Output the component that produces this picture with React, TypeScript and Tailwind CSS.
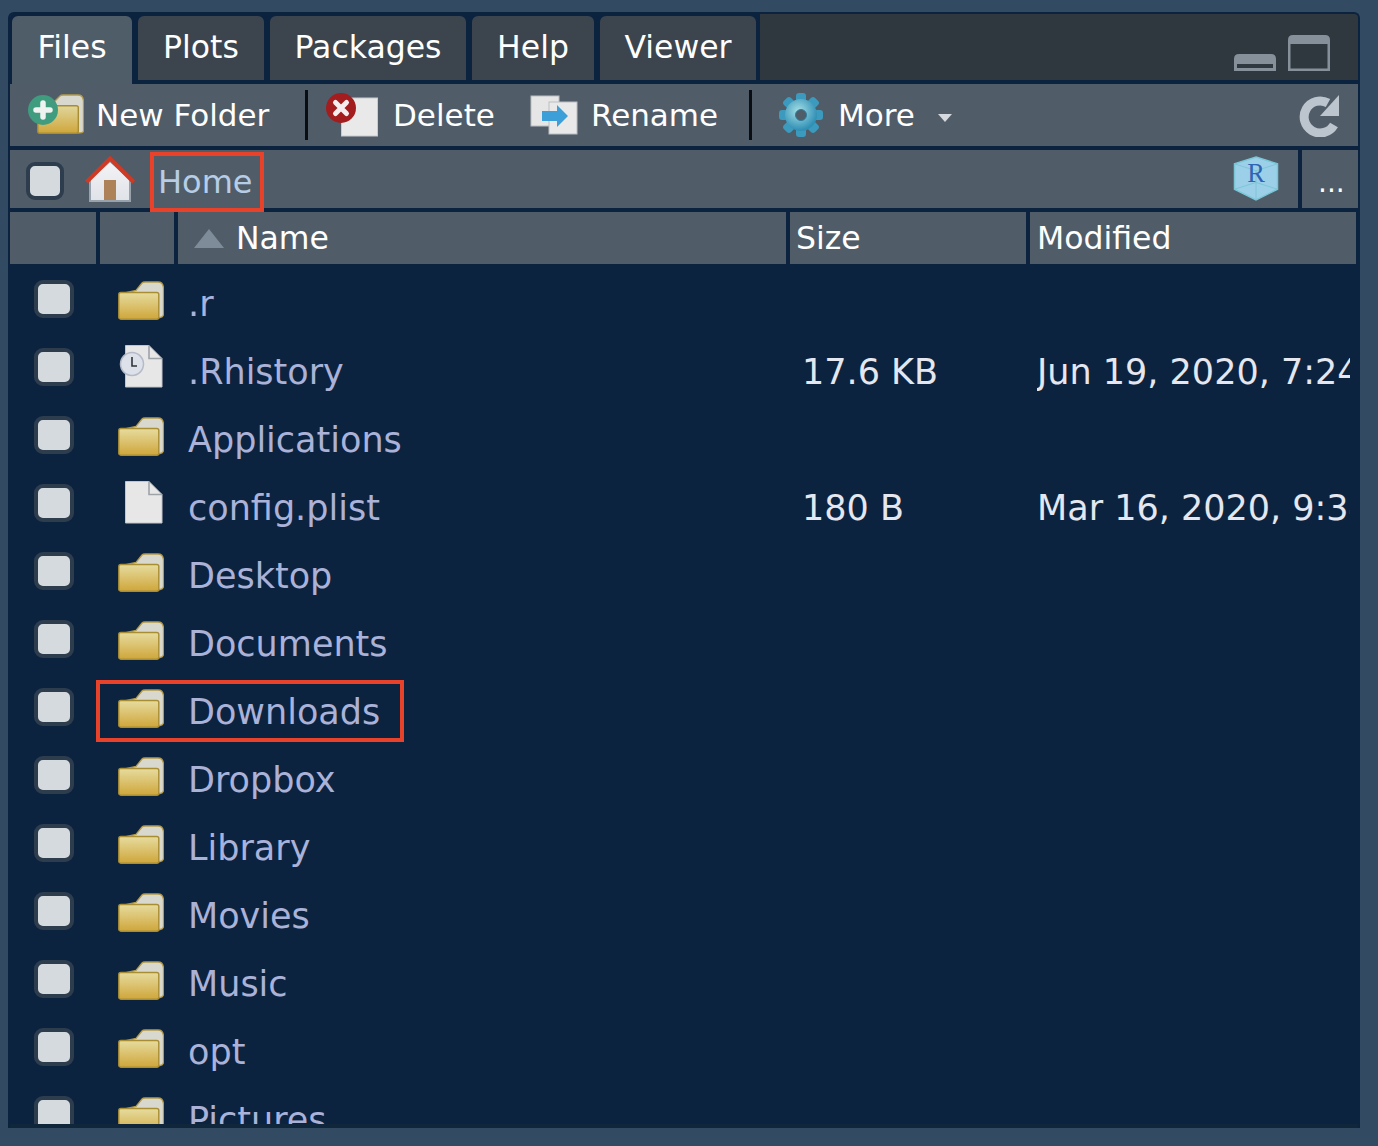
const FONT = "font-['DejaVu_Sans',sans-serif]";

const rows = [
  { name: ".r", kind: "folder" },
  { name: ".Rhistory", kind: "history", size: "17.6 KB", modified: "Jun 19, 2020, 7:24 PM" },
  { name: "Applications", kind: "folder" },
  { name: "config.plist", kind: "file", size: "180 B", modified: "Mar 16, 2020, 9:34 AM" },
  { name: "Desktop", kind: "folder" },
  { name: "Documents", kind: "folder" },
  { name: "Downloads", kind: "folder", marked: true },
  { name: "Dropbox", kind: "folder" },
  { name: "Library", kind: "folder" },
  { name: "Movies", kind: "folder" },
  { name: "Music", kind: "folder" },
  { name: "opt", kind: "folder" },
  { name: "Pictures", kind: "folder" },
];

const tabs = [
  { label: "Files", width: "w-[120px]" },
  { label: "Plots", width: "w-[126px]" },
  { label: "Packages", width: "w-[196px]" },
  { label: "Help", width: "w-[122px]" },
  { label: "Viewer", width: "w-[156px]" },
];

const FolderIcon = ({ className }: { className: string }) => (
  <svg className={className} viewBox="0 0 46 39">
    <defs>
      <linearGradient id="folderFront" x1="0" y1="0" x2="0" y2="1">
        <stop offset="0" stopColor="#e6dc9f" />
        <stop offset="1" stopColor="#cfa63a" />
      </linearGradient>
    </defs>
    <path
      d="M2 13 L18 9.5 L24 2 Q25 1 27 1 L40 1 Q45 1 45.5 7 L45.5 33 Q45.5 36 42 36.5 L38 37 Z"
      fill="#d9d8cf"
      stroke="#b39a4c"
      strokeWidth="1.3"
    />
    <rect x="0.8" y="11.5" width="40" height="26.7" rx="2" fill="url(#folderFront)" stroke="#a98d33" strokeWidth="1.4" />
  </svg>
);

const PageIcon = () => (
  <g>
    <path d="M0.5 0.5 L24 0.5 L37 13.5 L37 42 L0.5 42 Z" fill="#e7e7e7" stroke="#c3c5c8" />
    <path d="M24 0.5 L24 13.5 L37 13.5" fill="none" stroke="#9ea3a8" strokeWidth="1.6" />
  </g>
);

const FileIcon = ({ className }: { className: string }) => (
  <svg className={className} viewBox="0 0 38 43">
    <PageIcon />
  </svg>
);

const HistoryIcon = ({ className }: { className: string }) => (
  <svg className={className} viewBox="0 0 44 43">
    <g transform="translate(6 0)">
      <PageIcon />
    </g>
    <circle cx="13" cy="19" r="11.5" fill="#dde1ea" stroke="#b4bac8" strokeWidth="1.5" />
    <path d="M13 12 L13 21 L18 21" fill="none" stroke="#30343a" strokeWidth="1.6" />
  </svg>
);

const NewFolderIcon = () => (
  <svg className="h-[42px] w-[56px] shrink-0" viewBox="0 0 56 42">
    <path d="M24 10 L32 2 Q33 1 35 1 L50 1 Q55 1 55.5 7 L55.5 37 Q55.5 39 50 39 Z" fill="#d9d8cf" stroke="#b39a4c" strokeWidth="1.3" />
    <rect x="9.8" y="11.8" width="40.5" height="27.5" rx="2" fill="url(#newFolderFront)" stroke="#a98d33" strokeWidth="1.4" />
    <defs>
      <linearGradient id="newFolderFront" x1="0" y1="0" x2="0" y2="1">
        <stop offset="0" stopColor="#e0d69c" />
        <stop offset="1" stopColor="#cfa63a" />
      </linearGradient>
    </defs>
    <circle cx="15" cy="16" r="15" fill="#3f9c7f" />
    <path d="M15 9 L15 23 M8 16 L22 16" stroke="#eef3f1" strokeWidth="5.5" strokeLinecap="round" />
  </svg>
);

const DeleteIcon = () => (
  <svg className="ml-[3px] h-[44px] w-[52px] shrink-0" viewBox="0 0 52 44">
    <rect x="15.5" y="5" width="36" height="38" fill="#e9e9e9" stroke="#c8cacc" />
    <circle cx="15" cy="15" r="15" fill="#a31d1f" />
    <path d="M9.5 9.5 L20.5 20.5 M20.5 9.5 L9.5 20.5" stroke="#f4eeee" strokeWidth="5" strokeLinecap="round" />
  </svg>
);

const RenameIcon = () => (
  <svg className="h-[40px] w-[48px] shrink-0" viewBox="0 0 48 40">
    <rect x="1" y="1" width="28" height="30" fill="#e6e6e6" stroke="#b9bdc1" />
    <rect x="19" y="7" width="28" height="32" fill="#e9e9e9" stroke="#b9bdc1" />
    <path d="M12 16 L27 16 L27 10 L38 21 L27 32 L27 26 L12 26 Z" fill="#3d9fd8" />
  </svg>
);

const GearIcon = () => (
  <svg className="ml-[11px] h-[46px] w-[46px] shrink-0" viewBox="0 0 46 46">
    <defs>
      <radialGradient id="gearFill" cx="0.42" cy="0.38" r="0.6">
        <stop offset="0" stopColor="#a6dfe6" />
        <stop offset="1" stopColor="#2f8fb5" />
      </radialGradient>
    </defs>
    {[0, 45, 90, 135, 180, 225, 270, 315].map((deg) => (
      <rect key={deg} x="18" y="1" width="10" height="12" rx="3" fill="#3b9abd" transform={`rotate(${deg} 23 23)`} />
    ))}
    <circle cx="23" cy="23" r="16" fill="url(#gearFill)" />
    <circle cx="23" cy="23" r="5.5" fill="#505d69" stroke="#2c7c9d" strokeWidth="1" />
  </svg>
);

const RefreshIcon = () => (
  <svg className="h-[44px] w-[42px] shrink-0" viewBox="0 0 42 44">
    <path d="M36 32 A16 16 0 1 1 30 10" fill="none" stroke="#bcc4ce" strokeWidth="9" />
    <path d="M41 2 L41 23 L22 23 Z" fill="#bcc4ce" />
  </svg>
);

const HomeIcon = () => (
  <svg className="h-[46px] w-[50px] shrink-0" viewBox="0 0 50 46">
    <defs>
      <linearGradient id="houseWall" x1="0" y1="0" x2="0" y2="1">
        <stop offset="0" stopColor="#f4f4f6" />
        <stop offset="1" stopColor="#dfe2e8" />
      </linearGradient>
    </defs>
    <path d="M5 23 L25 5 L45 23 L45 45 L5 45 Z" fill="url(#houseWall)" stroke="#98a2ac" strokeWidth="2" />
    <rect x="19" y="24" width="12" height="20" fill="#ad8258" />
    <path d="M1.5 26 L25 2.5 L48.5 26" fill="none" stroke="#cf3a24" strokeWidth="4" />
  </svg>
);

const ProjectCube = () => (
  <svg className="h-[45px] w-[46px]" viewBox="0 0 46 46">
    <path d="M23 1 L45 8 L45 34 L23 45 L1 34 L1 8 Z" fill="#9bd0e8" stroke="#7ac6d6" strokeWidth="1.5" />
    <path d="M1 8 L23 15 L45 8 M1 34 L23 27 L45 34 M23 15 L23 45" fill="none" stroke="#74c3d2" strokeWidth="0.8" />
    <text x="23" y="27" textAnchor="middle" fontSize="27" fontFamily="'Liberation Serif',serif" fill="#2f63b3">
      R
    </text>
  </svg>
);

const Check = ({ className }: { className: string }) => (
  <div className={`${className} shrink-0 rounded-[9px] border-4 border-[#2d3d4e] bg-[#d5dade]`} />
);

const Separator = () => <div className="mx-[15px] h-[50px] w-[3px] shrink-0 bg-[#0a0d12] blur-[0.6px]" />;

const App = () => {
  return (
    <div className={`${FONT} h-[1146px] w-full overflow-hidden bg-[#324b63] pl-2 pr-[18px] pt-3`}>
      <div className="flex h-[1116px] flex-col overflow-hidden rounded-t-[6px] border-x-2 border-t-2 border-[#0c2340] bg-[#0c2340]">
        {/* tab bar */}
        <div className="flex h-[70px] shrink-0 bg-[#30383f]">
          <div className="flex gap-[6px] bg-[#0c2340] pl-[2px] pr-[4px] pt-[2px]">
            {tabs.map((tab, i) => (
              <div
                key={tab.label}
                className={`${tab.width} ${
                  i === 0 ? "h-[68px] bg-[#4f5d69]" : "h-[64px] bg-[#3c454e]"
                } z-10 rounded-t-[6px] text-center text-[31.5px] leading-[62px] text-white`}
              >
                {tab.label}
              </div>
            ))}
          </div>
          <div className="relative flex-1 border-b-4 border-[#0c2340]">
            <div className="absolute bottom-[9px] right-[28px] flex items-end gap-[12px]">
              <svg className="h-[18px] w-[42px]" viewBox="0 0 42 18">
                <path d="M0 18 L0 6 Q0 1 5 1 L37 1 Q42 1 42 6 L42 18 Z M3 11 L3 15 L39 15 L39 11 Z" fill="#85909a" fillRule="evenodd" />
              </svg>
              <svg className="h-[36px] w-[42px]" viewBox="0 0 42 36">
                <path d="M0 36 L0 5 Q0 0 5 0 L37 0 Q42 0 42 5 L42 36 Z M2.5 9 L2.5 33.5 L39.5 33.5 L39.5 9 Z" fill="#85909a" fillRule="evenodd" />
              </svg>
            </div>
          </div>
        </div>

        {/* toolbar */}
        <div className="flex h-[62px] shrink-0 items-center whitespace-nowrap bg-[#505d69] pl-[18px] pr-[18px] text-[31px] text-white">
          <NewFolderIcon />
          <span className="ml-[12px] w-[194px]">New Folder</span>
          <Separator />
          <DeleteIcon />
          <span className="ml-[15px] w-[137px]">Delete</span>
          <RenameIcon />
          <span className="ml-[13px] w-[143px]">Rename</span>
          <Separator />
          <GearIcon />
          <span className="ml-[14px]">More</span>
          <svg className="ml-[23px] mt-[5px] h-[8px] w-[14px]" viewBox="0 0 14 8">
            <path d="M0 0 L14 0 L7 8 Z" fill="#d5d8dc" />
          </svg>
          <div className="flex-1" />
          <RefreshIcon />
        </div>

        {/* path bar */}
        <div className="mt-1 flex h-[58px] shrink-0 gap-1">
          <div className="relative flex flex-1 items-center bg-[#505d69] pl-4 pt-1">
            <Check className="h-[38px] w-[38px]" />
            <div className="-mt-[4px] ml-[21px]">
              <HomeIcon />
            </div>
            <span className="ml-[23px] mt-[2px] text-[32px] text-[#b7cde6]">Home</span>
            <div className="absolute left-[140px] top-[2px] z-10 h-[60px] w-[114px] border-4 border-[#e8432a]" />
            <div className="absolute right-[19px] top-[6px]">
              <ProjectCube />
            </div>
          </div>
          <div className="w-[56px] bg-[#505d69] pl-[16px] text-[28px] leading-[66px] text-white">...</div>
        </div>

        {/* column headers */}
        <div className="mt-1 flex h-[52px] shrink-0 gap-1 pr-[2px] text-[31.5px] leading-[52px] text-white">
          <div className="w-[86px] bg-[#505d69]" />
          <div className="w-[74px] bg-[#505d69]" />
          <div className="flex w-[608px] items-center bg-[#505d69] pl-4">
            <svg className="h-[19px] w-[30px]" viewBox="0 0 30 19">
              <path d="M15 0 L30 19 L0 19 Z" fill="#7e8b99" />
            </svg>
            <span className="ml-3">Name</span>
          </div>
          <div className="w-[236px] bg-[#505d69] pl-[6px]">Size</div>
          <div className="flex-1 bg-[#505d69] pl-[7px]">Modified</div>
        </div>

        {/* file list */}
        <div className="h-[860px] shrink-0 overflow-hidden bg-[#0c2340] pt-[2px]">
          {rows.map((row) => (
            <div key={row.name} className="flex h-[68px] items-center">
              <div className="w-[90px] shrink-0 pl-6">
                <Check className="mb-[2px] h-[38px] w-[40px]" />
              </div>
              <div className="relative flex h-full w-[688px] shrink-0 items-center">
                <div className="flex w-[88px] shrink-0 pl-[18px]">
                  {row.kind === "folder" && <FolderIcon className="h-[39px] w-[46px]" />}
                  {row.kind === "history" && <HistoryIcon className="mb-[3px] ml-[1px] h-[43px] w-[44px]" />}
                  {row.kind === "file" && <FileIcon className="mb-[3px] ml-[7px] h-[43px] w-[38px]" />}
                </div>
                <span className="mt-[8px] text-[35px] text-[#aab2d8]">{row.name}</span>
                {row.marked && (
                  <div className="absolute left-[-4px] top-[6px] h-[62px] w-[308px] border-4 border-[#e8432a]" />
                )}
              </div>
              <div className="mt-[8px] w-[249px] shrink-0 pl-[14px] text-[35px] text-[#e4e7ef]">{row.size}</div>
              <div className="mt-[8px] w-[313px] shrink-0 overflow-hidden whitespace-nowrap text-[35px] text-[#e4e7ef]">
                {row.modified}
              </div>
            </div>
          ))}
        </div>
        <div className="h-1 shrink-0 bg-[#10263b]" />
      </div>
    </div>
  );
};

export default App;
